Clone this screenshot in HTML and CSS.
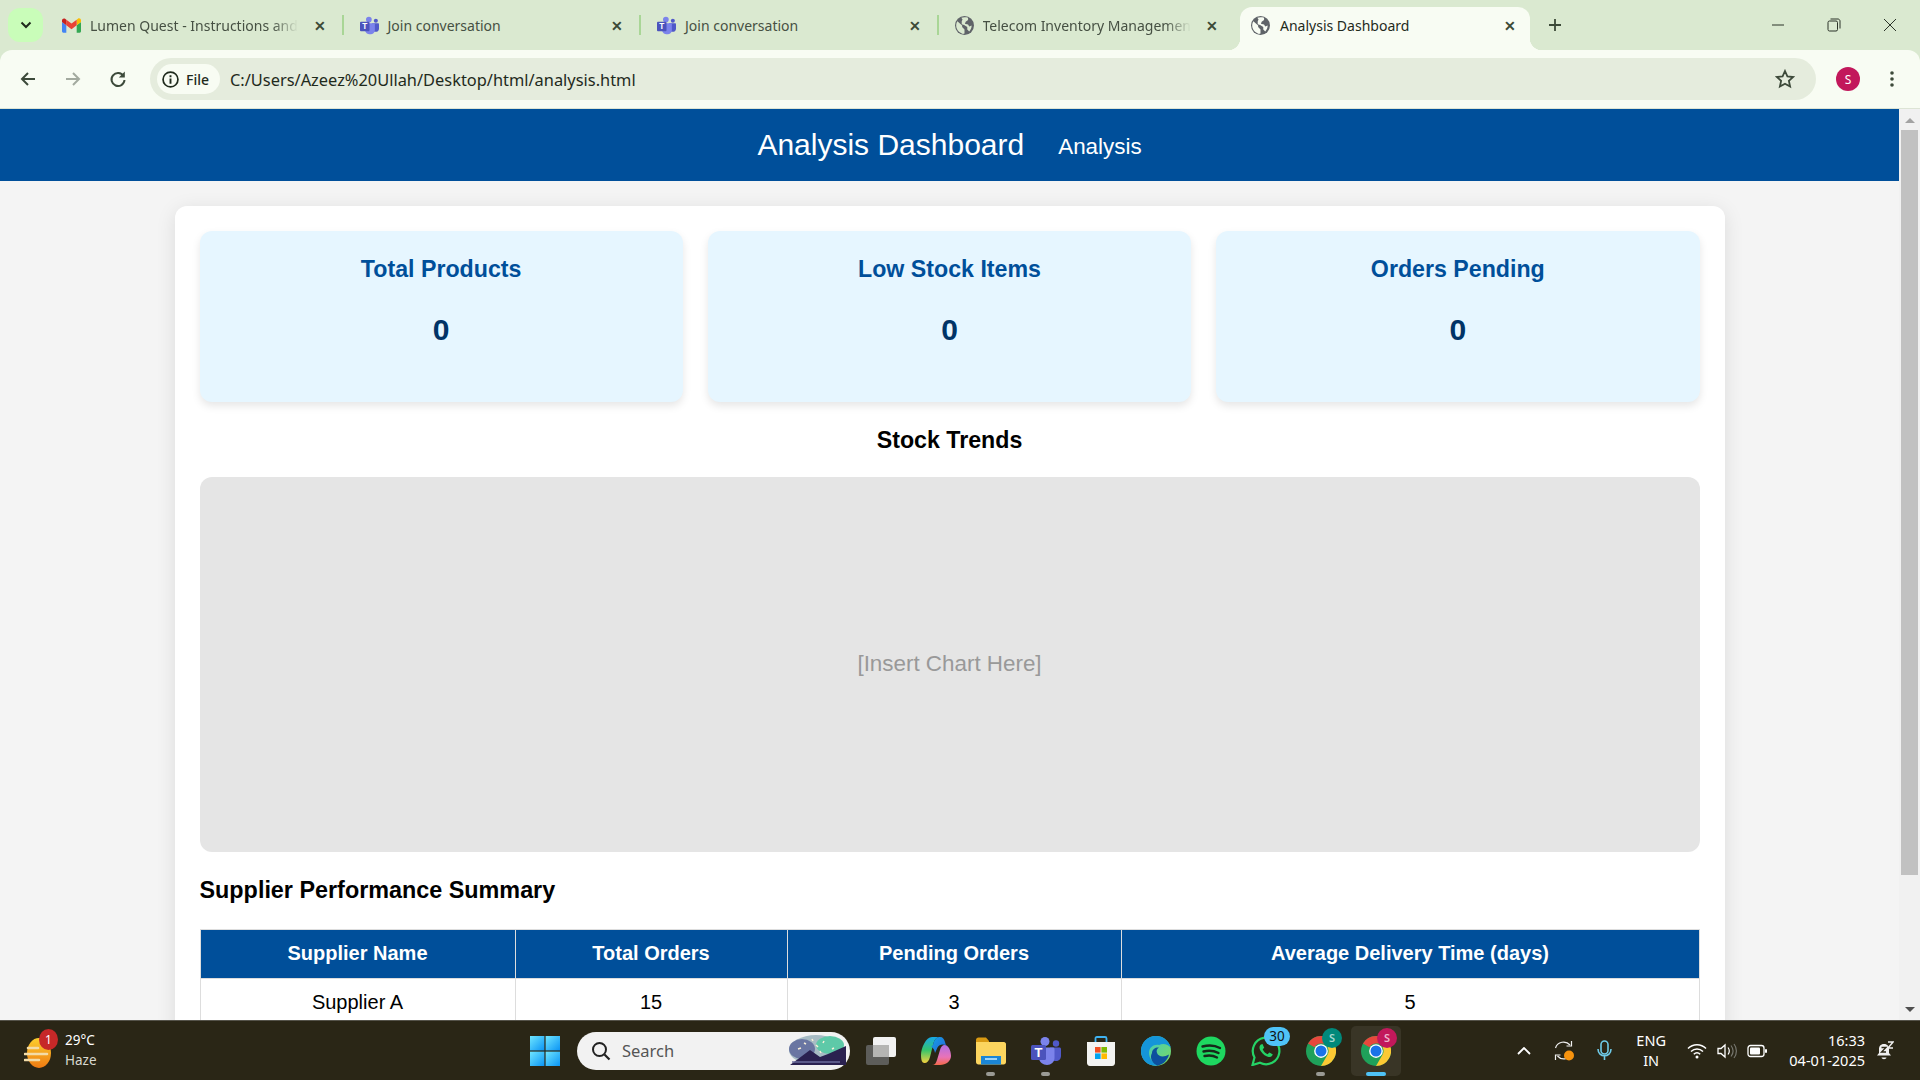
FILE: index.html
```html
<!DOCTYPE html>
<html lang="en">
<head>
  <meta charset="UTF-8" />
  <title>Analysis Dashboard</title>
  <link rel="stylesheet" href="styles.css">
</head>
<body>
  <!-- shared icons -->
  <svg class="defs" width="0" height="0">
    <defs>
      <symbol id="globe" viewBox="0 0 24 24">
        <circle cx="12" cy="12" r="12" fill="#5f6368"/>
        <path d="M3 6.500l6 5.500v2l3 3v5l-2 .6C5 21 1.500 17 1.500 12c0-2 .5-4 1.500-5.500z" fill="currentColor"/>
        <path d="M8 2.200c2-.8 6-.9 8.500 0v3l-3 2-1 2.500 4 1 1.500 2.500 3-1.200c.2 2.500-1 5.500-3 7.500l-2.500-2.500v-3l-4-2.500-3-1V6.500l1-2z" fill="currentColor"/>
      </symbol>
      <symbol id="teams" viewBox="0 0 30 28">
        <circle cx="14" cy="4.500" r="4.500" fill="#7b83eb"/>
        <circle cx="25" cy="6.500" r="3.200" fill="#5059c9"/>
        <path d="M19 10.500h9.500c.8 0 1.500.7 1.500 1.500v7c0 3-2.300 5-5 5s-6-2-6-5z" fill="#5059c9"/>
        <path d="M8 10.500h14c.8 0 1.500.7 1.500 1.500v9c0 4-3.500 7-7.500 7s-8-3-8-7z" fill="#7b83eb"/>
        <rect x="0" y="8" width="15" height="15" rx="1.500" fill="#4b53bc"/>
        <text x="7.500" y="20" text-anchor="middle" class="logo-t">T</text>
      </symbol>
      <symbol id="chrome" viewBox="0 0 48 48">
        <circle cx="24" cy="24" r="24" fill="#1fa15a"/>
        <path d="M24 0a24 24 0 0 1 20.800 12H24a12 12 0 0 0-10.400 6L3.200 12A24 24 0 0 1 24 0z" fill="#e8473c"/>
        <path d="M44.800 12A24 24 0 0 1 24 48l10.400-18a12 12 0 0 0 0-12z" fill="#fcc934"/>
        <circle cx="24" cy="24" r="11" fill="#fff"/>
        <circle cx="24" cy="24" r="8.800" fill="#1a73e8"/>
      </symbol>
      <linearGradient id="winGrad" x1="0" y1="0" x2="1" y2="1">
        <stop offset="0" stop-color="#6fe6ff"/>
        <stop offset="1" stop-color="#0a94f5"/>
      </linearGradient>
      <linearGradient id="edgeGrad" x1="0" y1="0" x2="1" y2="1">
        <stop offset="0" stop-color="#34c6d3"/>
        <stop offset="1" stop-color="#7fdc5a"/>
      </linearGradient>
      <linearGradient id="copilotA" x1="0" y1="0" x2="0" y2="1">
        <stop offset="0" stop-color="#17a8e8"/>
        <stop offset="0.5" stop-color="#35c46b"/>
        <stop offset="1" stop-color="#f4d23e"/>
      </linearGradient>
      <linearGradient id="copilotB" x1="0" y1="0" x2="0" y2="1">
        <stop offset="0" stop-color="#b06fe4"/>
        <stop offset="0.6" stop-color="#e873b8"/>
        <stop offset="1" stop-color="#f4694a"/>
      </linearGradient>
      <linearGradient id="copilotC" x1="0" y1="0" x2="1" y2="1">
        <stop offset="0" stop-color="#12a5e6"/>
        <stop offset="1" stop-color="#2a5fd8"/>
      </linearGradient>
      <linearGradient id="sunGrad" x1="0" y1="0" x2="0" y2="1">
        <stop offset="0" stop-color="#fbcf2e"/>
        <stop offset="1" stop-color="#ef7a12"/>
      </linearGradient>
    </defs>
  </svg>

  <!-- browser tabs -->
  <div class="tabstrip">
    <button class="tab-search">
      <svg width="12" height="8" viewBox="0 0 12 8"><path d="M1.500 1.500L6 6l4.500-4.500" fill="none" stroke="#1f2a1c" stroke-width="2"/></svg>
    </button>
    <div class="tab">
      <svg class="fav" viewBox="0 0 24 24">
        <path d="M1.600 21h3.850v-9.300L0 7.500v11.900C0 20.300.7 21 1.600 21z" fill="#4285f4"/>
        <path d="M18.550 21h3.850c.9 0 1.600-.7 1.600-1.600V7.500l-5.450 4.200z" fill="#34a853"/>
        <path d="M18.550 4.600v7.100L24 7.500V5.460c0-2-2.300-3.200-3.930-1.970z" fill="#fbbc04"/>
        <path d="M5.450 11.700V4.600L12 9.550l6.550-4.950v7.100L12 16.640z" fill="#ea4335"/>
        <path d="M0 5.460V7.500l5.450 4.200V4.600L3.930 3.500C2.300 2.300 0 3.450 0 5.460z" fill="#c5221f"/>
      </svg>
      <span class="tab-title fade">Lumen Quest - Instructions and</span>
      <span class="tab-close">✕</span>
    </div>
    <div class="tab">
      <svg class="fav"><use href="#teams"/></svg>
      <span class="tab-title">Join conversation</span>
      <span class="tab-close">✕</span>
    </div>
    <div class="tab">
      <svg class="fav"><use href="#teams"/></svg>
      <span class="tab-title">Join conversation</span>
      <span class="tab-close">✕</span>
    </div>
    <div class="tab no-sep">
      <svg class="fav globe"><use href="#globe"/></svg>
      <span class="tab-title fade">Telecom Inventory Managemen</span>
      <span class="tab-close">✕</span>
    </div>
    <div class="tab active">
      <svg class="fav globe"><use href="#globe"/></svg>
      <span class="tab-title">Analysis Dashboard</span>
      <span class="tab-close">✕</span>
    </div>
    <svg class="new-tab" width="14" height="14" viewBox="0 0 14 14"><path d="M7 1v12M1 7h12" stroke="#3c4a38" stroke-width="1.800"/></svg>
    <div class="win-controls">
      <svg width="14" height="14" viewBox="0 0 14 14"><path d="M1 7h12" stroke="#2b3328" stroke-width="1"/></svg>
      <svg width="14" height="14" viewBox="0 0 14 14"><rect x="1" y="3" width="9.500" height="10" rx="1.500" fill="none" stroke="#2b3328"/><path d="M3.500 1h7.500c1 0 2 1 2 2v7.500" fill="none" stroke="#2b3328"/></svg>
      <svg width="14" height="14" viewBox="0 0 14 14"><path d="M1 1l12 12M13 1L1 13" stroke="#2b3328" stroke-width="1"/></svg>
    </div>
  </div>

  <!-- address bar -->
  <div class="toolbar">
    <svg class="nav-btn" width="18" height="18" viewBox="0 0 18 18"><path d="M16 9H3M9 3L3 9l6 6" fill="none" stroke="#3d4a3a" stroke-width="2"/></svg>
    <svg class="nav-btn" width="18" height="18" viewBox="0 0 18 18"><path d="M2 9h13M9 3l6 6-6 6" fill="none" stroke="#a3aa9f" stroke-width="2"/></svg>
    <svg class="nav-btn" width="18" height="18" viewBox="0 0 18 18"><path d="M14.500 6A6.500 6.500 0 1 0 15.500 10" fill="none" stroke="#3d4a3a" stroke-width="2"/><path d="M15.800 1.500v6h-6z" fill="#3d4a3a"/></svg>
    <div class="omnibox">
      <div class="chip">
        <svg width="17" height="17" viewBox="0 0 16 16"><circle cx="8" cy="8" r="7" fill="none" stroke="#1f2a1c" stroke-width="1.600"/><path d="M8 7v5M8 4v1.800" stroke="#1f2a1c" stroke-width="1.800"/></svg>
        <span>File</span>
      </div>
      <span class="url">C:/Users/Azeez%20Ullah/Desktop/html/analysis.html</span>
      <svg class="star" width="20" height="20" viewBox="0 0 20 20"><path d="M10 2l2.400 5.400 5.800.6-4.300 3.900 1.200 5.700-5.100-2.900-5.100 2.900 1.200-5.700L1.800 8l5.800-.6z" fill="none" stroke="#3d4a3a" stroke-width="1.800"/></svg>
    </div>
    <div class="avatar">S</div>
    <svg class="kebab" width="4" height="18" viewBox="0 0 4 18"><circle cx="2" cy="3" r="1.800" fill="#3d4a3a"/><circle cx="2" cy="9" r="1.800" fill="#3d4a3a"/><circle cx="2" cy="15" r="1.800" fill="#3d4a3a"/></svg>
  </div>

  <!-- page -->
  <div class="viewport">
    <div class="page">
      <header class="site-header">
        <h1>Analysis Dashboard</h1>
        <a class="site-nav" href="#">Analysis</a>
      </header>
      <main class="container">
        <section class="cards">
          <div class="card"><h3>Total Products</h3><p>0</p></div>
          <div class="card"><h3>Low Stock Items</h3><p>0</p></div>
          <div class="card"><h3>Orders Pending</h3><p>0</p></div>
        </section>
        <h2 class="chart-title">Stock Trends</h2>
        <div class="chart">[Insert Chart Here]</div>
        <h2 class="table-title">Supplier Performance Summary</h2>
        <table class="suppliers">
          <thead>
            <tr>
              <th class="col-name">Supplier Name</th>
              <th class="col-total">Total Orders</th>
              <th class="col-pending">Pending Orders</th>
              <th>Average Delivery Time (days)</th>
            </tr>
          </thead>
          <tbody>
            <tr><td>Supplier A</td><td>15</td><td>3</td><td>5</td></tr>
          </tbody>
        </table>
      </main>
    </div>
    <div class="scrollbar">
      <div class="arrow up"></div>
      <div class="thumb"></div>
      <div class="arrow down"></div>
    </div>
  </div>

  <!-- windows taskbar -->
  <footer class="taskbar">
    <div class="weather">
      <div class="weather-icon">
        <svg width="30" height="34" viewBox="0 0 30 34">
          <ellipse cx="15" cy="18" rx="12" ry="15" fill="url(#sunGrad)"/>
          <path d="M4 13h10M1 19h22M1 25h14" stroke="#f3dca8" stroke-width="2.600" stroke-linecap="round"/>
        </svg>
        <span class="weather-badge">1</span>
      </div>
      <div class="weather-text"><span>29°C</span><span class="muted">Haze</span></div>
    </div>

    <div class="apps">
      <svg class="app" viewBox="0 0 30 30">
        <rect width="14.400" height="14.400" fill="url(#winGrad)"/>
        <rect x="15.600" width="14.400" height="14.400" fill="url(#winGrad)"/>
        <rect y="15.600" width="14.400" height="14.400" fill="url(#winGrad)"/>
        <rect x="15.600" y="15.600" width="14.400" height="14.400" fill="url(#winGrad)"/>
      </svg>
      <div class="search">
        <svg width="20" height="20" viewBox="0 0 20 20"><circle cx="8.500" cy="8.500" r="6.500" fill="none" stroke="#222" stroke-width="2"/><path d="M13.500 13.500l5 5" stroke="#222" stroke-width="2.200"/></svg>
        <span>Search</span>
        <svg class="search-art" width="62" height="32" viewBox="0 0 62 32">
          <ellipse cx="30" cy="15" rx="27" ry="15" fill="#a7bcc4"/>
          <ellipse cx="44" cy="10" rx="14" ry="9" fill="#5ec9a8"/>
          <ellipse cx="16" cy="14" rx="13" ry="10" fill="#6a76a2"/>
          <path d="M4 30l20-15 10 7 8-3 18-8v19z" fill="#2a2150"/>
          <path d="M6 27h48" stroke="#6b6d9c" stroke-width="1.500"/>
          <path d="M18 8l2 1M26 4l1 2M30 10l2 2M38 6l-1 2M34 16l1 2M46 14l2-1M12 14l3-1" stroke="#f8efd8" stroke-width="1.500"/>
        </svg>
      </div>
      <svg class="app" viewBox="0 0 30 28">
        <rect x="0" y="8" width="23" height="20" rx="2" fill="#5d5d5a"/>
        <rect x="7" y="0" width="23" height="20" rx="2" fill="#f2f2f2"/>
        <rect x="7" y="8" width="16" height="12" fill="#b5b5b3"/>
      </svg>
      <svg class="app" viewBox="0 0 30 30">
        <path d="M19 29h-8c3 0 4-2 5-5l3-10c.8-3 2-5 5-5 3 0 6 5 6 11 0 5-5 9-11 9z" fill="url(#copilotB)"/>
        <path d="M11 1h7c-4 1-5 4-6 8l-3 12c-1 4-3 6-5.500 6S0 24 0 19C0 12 5 1 11 1z" fill="url(#copilotA)"/>
        <path d="M11 1h8c3 0 4 2 5 5l1 3.500c-3-2-7-1-8.500 2L14 17c-.5-3-1.500-5-4-6.500l2-1.500c1-4 2-7 6-8z" fill="url(#copilotC)"/>
      </svg>
      <div class="app-wrap">
        <svg class="app" viewBox="0 0 30 28">
          <path d="M0 3c0-1.500 1-2.500 2.500-2.500H10l3 3.500v6H0z" fill="#d99a12"/>
          <path d="M0 5h28c1 0 2 1 2 2v18c0 1.500-1 2.500-2.500 2.500h-25C1 27.500 0 26.500 0 25z" fill="#fcd55f"/>
          <rect x="5" y="19" width="20" height="8.500" fill="#1b86d6"/>
          <rect x="9" y="21" width="12" height="2" fill="#9fd4f7"/>
        </svg>
        <i class="pill"></i>
      </div>
      <div class="app-wrap">
        <svg class="app"><use href="#teams"/></svg>
        <i class="pill"></i>
      </div>
      <svg class="app" viewBox="0 0 30 30">
        <path d="M9.500 6V2.500c0-.8.5-1.500 1.500-1.500h8c1 0 1.500.7 1.500 1.500V6" fill="none" stroke="#3fb3f2" stroke-width="1.800"/>
        <path d="M1 6h28v21c0 1.500-1 3-3 3H4c-2 0-3-1.500-3-3z" fill="#f3f3f1"/>
        <rect x="9" y="11" width="5.600" height="5.600" fill="#f25022"/>
        <rect x="15.400" y="11" width="5.600" height="5.600" fill="#7fba00"/>
        <rect x="9" y="17.400" width="5.600" height="5.600" fill="#00a4ef"/>
        <rect x="15.400" y="17.400" width="5.600" height="5.600" fill="#ffb900"/>
      </svg>
      <svg class="app" viewBox="0 0 30 30">
        <circle cx="15" cy="15" r="15" fill="url(#edgeGrad)"/>
        <path d="M0 15C0 7 6 0 15 0c7 0 13 4.500 15 12-3-4-8-5-12-3-5-1-10 2-10 8 0 5 4 10 9 12.800C7 30.500 0 24 0 15z" fill="#1595d9"/>
        <path d="M11 17c0-4 4-6 7-5.500-2 1-3 3-2 5.500 1.500 4 7 4.500 12 1.500-1.500 6-6 10-11.500 11.200C12 28 8 22 11 17z" fill="#0c4f9e"/>
      </svg>
      <svg class="app" viewBox="0 0 30 30">
        <circle cx="15" cy="15" r="14.500" fill="#1ed760"/>
        <path d="M6.500 10.500c6-1.700 12.500-1.200 17.500 1.500M7.500 15.500c5-1.300 10.500-.8 15 1.500M8.500 20c4.500-1 9-.5 12.500 1.500" fill="none" stroke="#16281a" stroke-width="2.400" stroke-linecap="round"/>
      </svg>
      <div class="app-wrap">
        <svg class="app" viewBox="0 0 30 30">
          <path d="M1.500 29l2-7.500A13.300 13.300 0 1 1 9 26.800z" fill="#2a2616" stroke="#25d366" stroke-width="2.200"/>
          <path d="M10 8.500c-2 1.500-2 4 0 7 2 3 5 5 7.500 5.500 2 .4 4-1 4.200-2.800l-3.500-1.700-1.500 1.700c-2-.7-4-2.600-5-5l1.500-1.500L11.500 8z" fill="#25d366"/>
        </svg>
        <span class="count">30</span>
      </div>
      <div class="app-wrap">
        <svg class="app"><use href="#chrome"/></svg>
        <span class="profile teal">S</span>
        <i class="pill"></i>
      </div>
      <div class="app-wrap current">
        <svg class="app"><use href="#chrome"/></svg>
        <span class="profile rose">S</span>
        <i class="pill blue"></i>
      </div>
    </div>

    <div class="tray">
      <svg width="14" height="8" viewBox="0 0 14 8"><path d="M1 7l6-6 6 6" fill="none" stroke="#fff" stroke-width="1.800"/></svg>
      <div class="sync">
        <svg width="20" height="21" viewBox="0 0 20 21">
          <path d="M1.500 8A8.500 8.500 0 0 1 16 5M18 13a8.500 8.500 0 0 1-14.500 3" fill="none" stroke="#f0f0f0" stroke-width="1.200"/>
          <path d="M17.500 1v5h-5M1.500 20v-5h5" fill="none" stroke="#f0f0f0" stroke-width="1.200"/>
          <circle cx="15" cy="15.500" r="5" fill="#f7930e"/>
        </svg>
      </div>
      <svg width="15" height="21" viewBox="0 0 15 21"><rect x="4" y="1" width="7" height="13" rx="3.500" fill="none" stroke="#6fcbe8" stroke-width="1.600"/><path d="M1 9c0 9 13 9 13 0M7.500 15v5" fill="none" stroke="#6fcbe8" stroke-width="1.600"/></svg>
      <div class="lang"><span>ENG</span><span>IN</span></div>
      <div class="tray-status">
        <svg width="20" height="16" viewBox="0 0 20 16"><path d="M1 5.500c5-5 13-5 18 0M4 8.500c3.500-3.500 8.500-3.500 12 0M6.800 11.300c2-2 4.400-2 6.400 0" fill="none" stroke="#fff" stroke-width="1.500"/><circle cx="10" cy="14" r="1.500" fill="#fff"/></svg>
        <svg width="20" height="16" viewBox="0 0 20 16"><path d="M1 5.500h3l4-3.500v12l-4-3.500H1z" fill="none" stroke="#fff" stroke-width="1.300"/><path d="M11 4.500c1.500 2 1.500 5 0 7" fill="none" stroke="#fff" stroke-width="1.200"/><path d="M14 2.500c2.500 3.300 2.500 7.700 0 11M17 1c3.200 4 3.200 10 0 14" fill="none" stroke="#77776f" stroke-width="1.200"/></svg>
        <svg width="20" height="14" viewBox="0 0 20 14"><rect x="1" y="1.500" width="16" height="11" rx="2.500" fill="none" stroke="#fff" stroke-width="1.300"/><rect x="3" y="3.500" width="10" height="7" rx="1" fill="#fff"/><rect x="18" y="5" width="2" height="4" rx="1" fill="#fff"/></svg>
      </div>
      <div class="clock"><span>16:33</span><span>04-01-2025</span></div>
      <svg class="bell" width="18" height="20" viewBox="0 0 18 20">
        <path d="M8 3c-3.500 0-5 2.500-5 5v4l-2 2.500h14L13 12V8c0-2.500-1.500-5-5-5z" fill="#f0f0f0"/>
        <path d="M5.500 16.500h5c-.3 2.200-4.700 2.200-5 0z" fill="#f0f0f0"/>
        <path d="M5.500 6.500h4.500l-4.500 4.500h4.500" fill="none" stroke="#2a2616" stroke-width="1.300"/>
        <path d="M12 1h5l-5 6h5" fill="none" stroke="#f0f0f0" stroke-width="1.400"/>
      </svg>
    </div>
  </footer>
</body>
</html>
```

FILE: styles.css
```css
* {
  margin: 0;
  padding: 0;
  box-sizing: border-box;
}

html, body {
  height: 100%;
  overflow: hidden;
}

body {
  display: flex;
  flex-direction: column;
  height: 1080px;
  font-family: "Liberation Sans", Arial, sans-serif;
  background: #dae9d0;
}

.defs {
  position: absolute;
}

.logo-t {
  font: bold 13px "Liberation Sans", sans-serif;
  fill: #fff;
}

/* tabs */
.tabstrip {
  display: flex;
  align-items: flex-end;
  height: 50px;
  flex: none;
  padding-left: 8px;
  background: #dae9d0;
  font-family: "Noto Sans", sans-serif;
  font-size: 14px;
  color: #465043;
}

.tab-search {
  align-self: flex-start;
  display: flex;
  align-items: center;
  justify-content: center;
  width: 35px;
  height: 34px;
  margin-top: 8px;
  border: none;
  border-radius: 12px;
  background: #c9fdb9;
}

.tab {
  position: relative;
  display: flex;
  align-items: center;
  width: 297.500px;
  height: 43px;
  padding: 0 15px 6px 19px;
}

.tab::after {
  content: "";
  position: absolute;
  right: -3px;
  top: 8px;
  width: 2px;
  height: 20px;
  background: #a9d696;
}

.tab.no-sep::after {
  display: none;
}

.tab.active {
  width: 290px;
  margin-left: 7px;
  padding-left: 11px;
  padding-right: 14px;
  background: #f8fcf3;
  color: #1f2a1c;
  border-radius: 12px 12px 0 0;
}

.tab.active::before,
.tab.active::after {
  content: "";
  position: absolute;
  top: auto;
  bottom: 0;
  width: 12px;
  height: 12px;
}

.tab.active::before {
  left: -12px;
  background: radial-gradient(circle at 0 0, transparent 12px, #f8fcf3 12.500px);
}

.tab.active::after {
  right: -12px;
  background: radial-gradient(circle at 100% 0, transparent 12px, #f8fcf3 12.500px);
}

.fav {
  width: 19px;
  height: 19px;
  flex: none;
}

.fav.globe {
  color: #dae9d0;
}

.active .fav.globe {
  color: #f8fcf3;
}

.tab-title {
  margin-left: 9px;
  white-space: nowrap;
}

.active .tab-title {
  margin-left: 10px;
}

.tab-title.fade {
  -webkit-mask-image: linear-gradient(to left, transparent 0, #000 26px);
  mask-image: linear-gradient(to left, transparent 0, #000 26px);
}

.tab-close {
  margin-left: auto;
  font-size: 14px;
  font-weight: 700;
  color: #3c4a38;
}

.new-tab {
  align-self: center;
  margin-left: 18px;
}

.win-controls {
  display: flex;
  gap: 42px;
  margin-left: auto;
  align-self: flex-start;
  margin-top: 18px;
  margin-right: 23px;
}

/* address bar */
.toolbar {
  display: flex;
  align-items: center;
  height: 59px;
  flex: none;
  padding-left: 19px;
  background: #f8fcf3;
  border-radius: 12px 12px 0 0;
  border-bottom: 1px solid #dde4d5;
}

.nav-btn {
  margin-right: 27px;
  flex: none;
}

.nav-btn:nth-child(3) {
  margin-right: 23px;
}

.omnibox {
  display: flex;
  align-items: center;
  width: 1666px;
  height: 42px;
  padding: 0 21px 0 7px;
  border-radius: 21px;
  background: #e5ecdd;
  font-family: "Noto Sans", sans-serif;
  color: #1f2a1c;
}

.chip {
  display: flex;
  align-items: center;
  gap: 7px;
  height: 30px;
  padding: 0 11px 0 5px;
  border-radius: 15px;
  background: #f8fcf3;
  font-size: 14px;
  font-weight: 500;
}

.url {
  margin-left: 10px;
  font-size: 16.400px;
}

.star {
  margin-left: auto;
}

.avatar {
  display: flex;
  align-items: center;
  justify-content: center;
  width: 24px;
  height: 24px;
  margin-left: 20px;
  border-radius: 50%;
  background: #c2185b;
  color: #fff;
  font: 12px "Noto Sans", sans-serif;
}

.kebab {
  margin-left: 30px;
}

/* page area */
.viewport {
  display: flex;
  flex: 1;
  min-height: 0;
}

.page {
  flex: 1;
  min-width: 0;
  overflow: hidden;
  background: #f4f4f4;
}

.site-header {
  display: flex;
  align-items: center;
  justify-content: center;
  gap: 34px;
  height: 72px;
  background: #004f9a;
  color: #fff;
}

.site-header h1 {
  font-size: 30px;
  font-weight: 400;
}

.site-nav {
  margin-top: 4px;
  font-size: 22.400px;
  color: #fff;
  text-decoration: none;
}

.container {
  width: 1550px;
  margin: 25px auto 0;
  padding: 25px;
  background: #fff;
  border-radius: 12px;
  box-shadow: 0 4px 20px rgba(0, 0, 0, 0.1);
}

.cards {
  display: grid;
  grid-template-columns: repeat(3, 1fr);
  gap: 25px;
}

.card {
  height: 171px;
  padding-top: 25px;
  text-align: center;
  background: #e6f6ff;
  border-radius: 12px;
  box-shadow: 0 4px 8px rgba(0, 0, 0, 0.1);
}

.card h3 {
  font-size: 23.200px;
  color: #004f9a;
}

.card p {
  margin-top: 30px;
  font-size: 30px;
  font-weight: 700;
  color: #003366;
}

.chart-title {
  margin-top: 25px;
  text-align: center;
  font-size: 23.200px;
  color: #000;
}

.chart {
  display: flex;
  align-items: center;
  justify-content: center;
  height: 375px;
  margin-top: 23px;
  padding-bottom: 2px;
  border-radius: 12px;
  background: #e5e5e5;
  font-size: 22.400px;
  color: #999;
}

.table-title {
  margin-top: 25px;
  font-size: 23.360px;
  color: #000;
}

.suppliers {
  width: 100%;
  margin-top: 25px;
  border-collapse: collapse;
  font-size: 20px;
  text-align: center;
}

.suppliers th,
.suppliers td {
  padding: 12px;
  border: 1px solid #ddd;
}

.suppliers th {
  padding-bottom: 13px;
  background: #004f9a;
  color: #fff;
}

.col-name {
  width: 315px;
}

.col-total {
  width: 272px;
}

.col-pending {
  width: 334px;
}

/* fake scrollbar */
.scrollbar {
  display: flex;
  flex-direction: column;
  align-items: center;
  width: 21px;
  flex: none;
  background: #f1f1f1;
  padding: 9px 0 8px;
}

.arrow {
  width: 0;
  height: 0;
  border-left: 5px solid transparent;
  border-right: 5px solid transparent;
}

.arrow.up {
  border-bottom: 5px solid #a3a3a3;
}

.arrow.down {
  margin-top: auto;
  border-top: 5px solid #505050;
}

.thumb {
  width: 17px;
  height: 745px;
  margin-top: 7px;
  background: #c1c1c1;
}

/* taskbar */
.taskbar {
  display: flex;
  align-items: center;
  height: 60px;
  flex: none;
  background: #2a2616;
  border-top: 1px solid #55534a;
  color: #fff;
  font-family: "Noto Sans", sans-serif;
}

.weather {
  display: flex;
  align-items: center;
  width: 530px;
  padding-left: 24px;
}

.weather-icon {
  position: relative;
  width: 41px;
  height: 40px;
  padding-top: 4px;
}

.weather-badge {
  position: absolute;
  left: 15px;
  top: -2px;
  width: 19px;
  height: 21px;
  border-radius: 50%;
  background: #c62828;
  font-size: 12px;
  line-height: 21px;
  text-align: center;
}

.weather-text {
  display: flex;
  flex-direction: column;
  padding-bottom: 2px;
  font-size: 13.500px;
  line-height: 20px;
}

.muted {
  color: #d8d8d0;
}

.apps {
  display: flex;
  align-items: center;
  gap: 25px;
}

.app {
  display: block;
  width: 30px;
  height: 30px;
  flex: none;
}

.search {
  display: flex;
  align-items: center;
  width: 273px;
  height: 38px;
  margin: 0 -9px 0 -8px;
  padding-left: 14px;
  border-radius: 19px;
  background: #f2f2f2;
  color: #555;
  font-size: 16.500px;
}

.search span {
  margin-left: 11px;
}

.search-art {
  margin-left: auto;
  margin-right: 2px;
}

.app-wrap {
  position: relative;
}

.pill {
  position: absolute;
  left: 10px;
  bottom: -10px;
  width: 9px;
  height: 4px;
  border-radius: 2px;
  background: #9a9a94;
}

.pill.blue {
  left: 5px;
  width: 20px;
  background: #4fc3f7;
}

.app-wrap.current::before {
  content: "";
  position: absolute;
  left: -10px;
  right: -10px;
  top: -10px;
  bottom: -10px;
  border-radius: 5px;
  background: rgba(255, 255, 255, 0.07);
}

.app-wrap.current .app {
  position: relative;
}

.count {
  position: absolute;
  left: 13px;
  top: -9px;
  width: 26px;
  height: 19px;
  border-radius: 10px;
  background: #4fc3f7;
  color: #111;
  font-size: 13.500px;
  line-height: 19px;
  text-align: center;
}

.profile {
  position: absolute;
  left: 16px;
  top: -8px;
  width: 20px;
  height: 20px;
  border-radius: 50%;
  font-size: 11px;
  font-weight: 600;
  line-height: 20px;
  text-align: center;
}

.teal {
  background: #00897b;
  color: #a8d8d0;
}

.rose {
  background: #c2185b;
  color: #eeb4cb;
}

.tray {
  display: flex;
  align-items: center;
  margin-left: auto;
  padding-right: 26px;
  font-size: 14.500px;
}

.sync {
  display: flex;
  margin: 0 23px;
}

.lang {
  display: flex;
  flex-direction: column;
  align-items: center;
  margin: 0 21px 0 24px;
  padding-bottom: 2px;
  line-height: 20px;
}

.tray-status {
  display: flex;
  align-items: center;
  gap: 10px;
}

.clock {
  display: flex;
  flex-direction: column;
  align-items: flex-end;
  width: 98px;
  margin-right: 11px;
  padding-bottom: 2px;
  line-height: 20px;
}
```
